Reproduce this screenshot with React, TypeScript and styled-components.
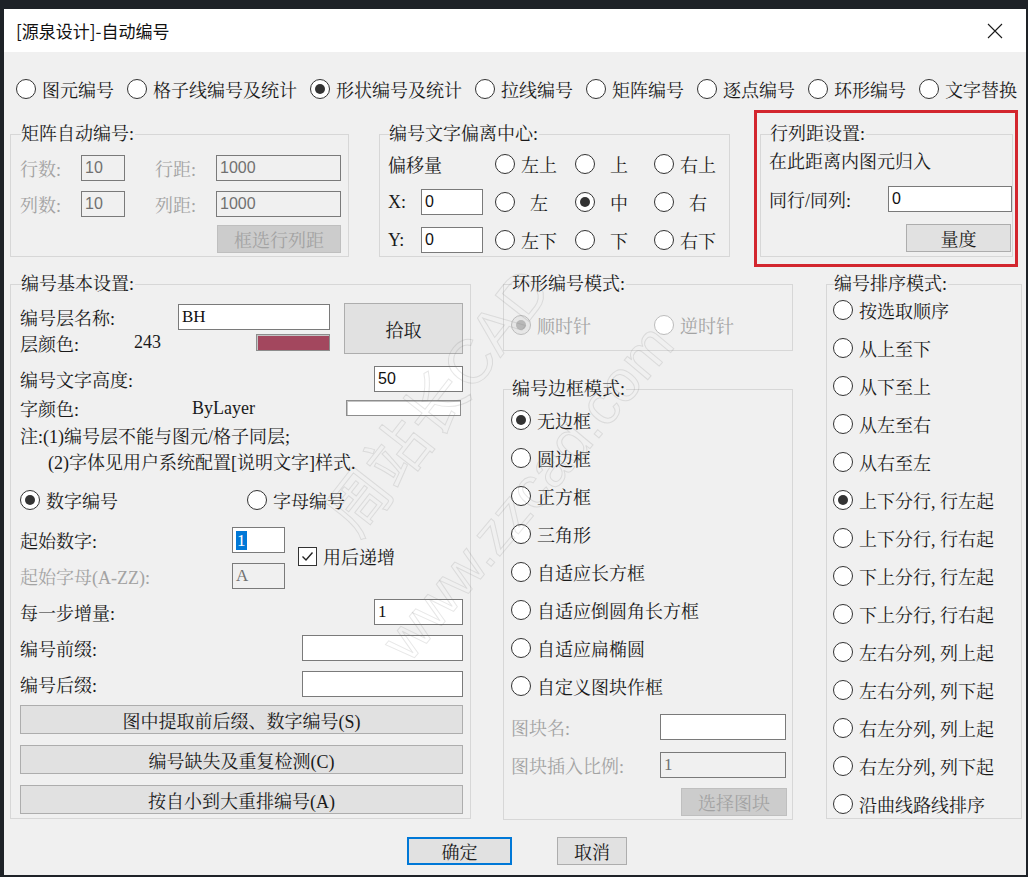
import React from "react";
import styled, { createGlobalStyle } from "styled-components";

const UI = `"Liberation Serif", "Noto Serif CJK SC", "Noto Sans CJK SC", serif`;
const SANS = `"Liberation Sans", "Noto Sans CJK SC", sans-serif`;
const TEXT = "#1a1a1a";
const DIM = "#a3a3a3";

const GlobalStyle = createGlobalStyle`
  html, body { margin: 0; padding: 0; background: #1e2227; }
  body { font-family: ${UI}; font-size: 18px; color: ${TEXT}; }
  * { box-sizing: border-box; }
`;

const Dialog = styled.div`
  margin: 9px 0 0 4px;
  width: 1022px;
  height: 866px;
  background: #f0f0f0;
  display: flex;
  flex-direction: column;
`;

const TitleBar = styled.div`
  height: 43px;
  flex: none;
  background: #ffffff;
  display: flex;
  align-items: center;
  justify-content: space-between;
  padding: 0 23px 0 12px;
`;

const TitleText = styled.span`
  font-family: "Noto Sans CJK SC", sans-serif;
  font-size: 17px;
  color: #111;
`;

const Body = styled.div`
  position: relative;
  flex: 1;
  padding: 27px 0 0 6px;
  overflow: hidden;
`;

const ModeRow = styled.div`
  display: flex;
  gap: 13px;
  height: 20px;
  align-items: center;
  padding-left: 6px;
`;

const TopRow = styled.div`
  display: flex;
  align-items: flex-start;
  margin-top: 11px;
`;

const BottomRow = styled.div`
  display: flex;
  align-items: flex-start;
  margin-top: 7px;
`;

const Column = styled.div<{ $w: number; $ml: number }>`
  display: flex;
  flex-direction: column;
  width: ${(p) => p.$w}px;
  margin-left: ${(p) => p.$ml}px;
`;

const Group = styled.fieldset<{
  $w: number;
  $h: number;
  $pt: number;
  $pl: number;
  $pr?: number;
  $mt?: number;
  $ml?: number;
}>`
  margin: ${(p) => p.$mt ?? 0}px 0 0 ${(p) => p.$ml ?? 0}px;
  min-width: 0;
  flex: none;
  width: ${(p) => p.$w}px;
  height: ${(p) => p.$h}px;
  border: 1px solid #d7d7d7;
  padding: ${(p) => p.$pt}px ${(p) => p.$pr ?? 6}px 0 ${(p) => p.$pl}px;
`;

const Legend = styled.legend`
  padding: 0 1px 0 0;
  margin-left: 1px;
  font-size: 18px;
  line-height: 20px;
  color: ${TEXT};
`;

const RedFrame = styled.div`
  margin-left: 24px;
  width: 264px;
  height: 157px;
  border: 3px solid #d3262e;
  padding: 11px 2px 0 3px;
`;

const Row = styled.div<{ $h?: number; $mt?: number; $pl?: number; $between?: boolean; $end?: boolean; $grow?: boolean }>`
  display: flex;
  align-items: center;
  height: ${(p) => p.$h ?? 26}px;
  margin-top: ${(p) => p.$mt ?? 0}px;
  padding-left: ${(p) => p.$pl ?? 0}px;
  ${(p) => (p.$grow ? "flex: 1;" : "")}
  justify-content: ${(p) => (p.$between ? "space-between" : p.$end ? "flex-end" : "flex-start")};
  white-space: nowrap;
`;

const Label = styled.span<{ $w?: number; $dim?: boolean; $col?: number }>`
  flex: none;
  ${(p) => (p.$w ? `width: ${p.$w}px;` : "")}
  ${(p) => (p.$col ? `grid-column: ${p.$col};` : "")}
  color: ${(p) => (p.$dim ? DIM : TEXT)};
  white-space: nowrap;
`;

const Field = styled.div<{ $w: number; $dim?: boolean; $serif?: boolean; $mr?: number; $col?: number }>`
  flex: none;
  ${(p) => (p.$col ? `grid-column: ${p.$col};` : "")}
  width: ${(p) => p.$w}px;
  height: 26px;
  margin-right: ${(p) => p.$mr ?? 0}px;
  border: 1px solid #7a7a7a;
  background: ${(p) => (p.$dim ? "#f0f0f0" : "#ffffff")};
  color: ${(p) => (p.$dim ? "#707070" : "#111")};
  font-family: ${(p) => (p.$serif ? UI : SANS)};
  font-size: ${(p) => (p.$serif ? 17 : 16)}px;
  display: flex;
  align-items: center;
  padding-left: 3px;
`;

const Selected = styled.span`
  background: #0078d7;
  color: #ffffff;
  line-height: 19px;
  padding: 0 1px;
`;

const Btn = styled.button<{ $w?: number; $h?: number; $dim?: boolean; $primary?: boolean }>`
  flex: none;
  width: ${(p) => (p.$w ? `${p.$w}px` : "100%")};
  height: ${(p) => p.$h ?? 28}px;
  margin: 0;
  padding: 0;
  font-family: ${UI};
  font-size: 18px;
  color: ${(p) => (p.$dim ? DIM : TEXT)};
  background: ${(p) => (p.$dim ? "#cccccc" : "#e1e1e1")};
  border: ${(p) => (p.$primary ? "2px solid #0078d7" : p.$dim ? "1px solid #bfbfbf" : "1px solid #adadad")};
  display: flex;
  align-items: center;
  justify-content: center;
`;

const RadioItem = styled.label<{ $w?: number; $dim?: boolean; $indent?: boolean }>`
  display: flex;
  align-items: center;
  flex: none;
  height: 26px;
  ${(p) => (p.$w ? `width: ${p.$w}px;` : "")}
  color: ${(p) => (p.$dim ? DIM : TEXT)};
  white-space: nowrap;
  & > span:last-child {
    margin-left: ${(p) => (p.$indent ? 15 : 6)}px;
  }
`;

const Circle = styled.span<{ $on?: boolean; $dim?: boolean }>`
  position: relative;
  flex: none;
  width: 20px;
  height: 20px;
  border-radius: 50%;
  border: 1px solid ${(p) => (p.$dim ? "#bcbcbc" : "#333333")};
  background: ${(p) => (p.$dim && p.$on ? "#e6e6e6" : "#ffffff")};
  &::after {
    content: "";
    display: ${(p) => (p.$on ? "block" : "none")};
    position: absolute;
    left: 4px;
    top: 4px;
    width: 10px;
    height: 10px;
    border-radius: 50%;
    background: ${(p) => (p.$dim ? "#b8b8b8" : "#333333")};
  }
`;

const Radio: React.FC<{ label: string; on?: boolean; dim?: boolean; w?: number; indent?: boolean }> = ({
  label,
  on,
  dim,
  w,
  indent,
}) => (
  <RadioItem $w={w} $dim={dim} $indent={indent}>
    <Circle $on={on} $dim={dim} />
    <span>{label}</span>
  </RadioItem>
);

const MatrixGrid = styled.div`
  display: grid;
  grid-template-columns: 61px 74px 61px 125px;
  grid-template-rows: 26px 26px 28px;
  row-gap: 10px;
  align-items: center;
`;

const GridEnd = styled.div<{ $col: number; $mt?: number }>`
  grid-column: ${(p) => p.$col};
  justify-self: end;
  margin-top: ${(p) => p.$mt ?? 0}px;
`;

const OffsetGrid = styled.div`
  display: grid;
  grid-template-columns: 33px 74px 80px 79px auto;
  grid-template-rows: 26px 26px 26px;
  row-gap: 12px;
  align-items: center;
`;

const SpanTwo = styled.span`
  grid-column: 1 / 3;
  align-self: start;
`;

const PickBlock = styled.div`
  display: flex;
  margin-top: 9px;
  height: 51px;
`;

const PickLeft = styled.div`
  flex: 1;
  display: flex;
  flex-direction: column;
`;

const Swatch = styled.div<{ $w: number; $h: number; $c: string; $mr?: number }>`
  flex: none;
  width: ${(p) => p.$w}px;
  height: ${(p) => p.$h}px;
  margin-right: ${(p) => p.$mr ?? 0}px;
  background: ${(p) => p.$c};
  border: 1px solid #8d8d8d;
  box-shadow: inset 1px 1px 0 #c4c4c4;
`;

const StartGrid = styled.div`
  display: grid;
  grid-template-columns: 212px 53px 13px auto;
  grid-template-rows: 26px 26px;
  row-gap: 10px;
  align-items: center;
  margin-top: 14px;
`;

const CheckCell = styled.div`
  grid-column: 4;
  grid-row: 1 / 3;
  align-self: start;
  margin-top: 16px;
  display: flex;
  align-items: center;
  gap: 6px;
`;

const CheckBox = styled.span`
  flex: none;
  width: 19px;
  height: 19px;
  border: 1px solid #333333;
  background: #ffffff;
  display: flex;
  align-items: center;
  justify-content: center;
`;

const ButtonStack = styled.div`
  display: flex;
  flex-direction: column;
  gap: 11px;
  margin-top: 8px;
`;

const RadioList = styled.div<{ $gap: number }>`
  display: flex;
  flex-direction: column;
  gap: ${(p) => p.$gap}px;
`;

const Footer = styled.div`
  display: flex;
  justify-content: center;
  gap: 45px;
  margin-top: 17px;
  padding-right: 2px;
`;

const Watermark = styled.div<{ $x: number; $y: number; $size: number; $angle: number }>`
  position: absolute;
  left: ${(p) => p.$x}px;
  top: ${(p) => p.$y}px;
  font-family: ${SANS};
  font-size: ${(p) => p.$size}px;
  line-height: 1;
  color: transparent;
  -webkit-text-stroke: 1px rgba(120, 120, 120, 0.18);
  white-space: nowrap;
  pointer-events: none;
  transform-origin: 0 100%;
  transform: rotate(${(p) => p.$angle}deg);
`;

const CloseIcon = () => (
  <svg width="16" height="16" viewBox="0 0 16 16">
    <path d="M1 1 L15 15 M15 1 L1 15" stroke="#1a1a1a" strokeWidth="1.1" fill="none" />
  </svg>
);

const sortModes = [
  "按选取顺序",
  "从上至下",
  "从下至上",
  "从左至右",
  "从右至左",
  "上下分行, 行左起",
  "上下分行, 行右起",
  "下上分行, 行左起",
  "下上分行, 行右起",
  "左右分列, 列上起",
  "左右分列, 列下起",
  "右左分列, 列上起",
  "右左分列, 列下起",
  "沿曲线路线排序",
];

const frameModes = [
  "无边框",
  "圆边框",
  "正方框",
  "三角形",
  "自适应长方框",
  "自适应倒圆角长方框",
  "自适应扁椭圆",
  "自定义图块作框",
];

const topModes = ["图元编号", "格子线编号及统计", "形状编号及统计", "拉线编号", "矩阵编号", "逐点编号", "环形编号", "文字替换"];

export default function App() {
  return (
    <>
      <GlobalStyle />
      <Dialog>
        <TitleBar>
          <TitleText>[源泉设计]-自动编号</TitleText>
          <CloseIcon />
        </TitleBar>
        <Body>
          <ModeRow>
            {topModes.map((m, i) => (
              <Radio key={m} label={m} on={i === 2} />
            ))}
          </ModeRow>

          <TopRow>
            <Group $w={339} $h={133} $pt={11} $pl={9} $mt={14}>
              <Legend>矩阵自动编号:</Legend>
              <MatrixGrid>
                <Label $dim>行数:</Label>
                <Field $w={44} $dim>10</Field>
                <Label $dim>行距:</Label>
                <Field $w={125} $dim>1000</Field>
                <Label $dim>列数:</Label>
                <Field $w={44} $dim>10</Field>
                <Label $dim>列距:</Label>
                <Field $w={125} $dim>1000</Field>
                <GridEnd $col={4} $mt={-4}>
                  <Btn $w={124} $dim>框选行列距</Btn>
                </GridEnd>
              </MatrixGrid>
            </Group>

            <Group $w={351} $h={133} $pt={7} $pl={8} $mt={14} $ml={30}>
              <Legend>编号文字偏离中心:</Legend>
              <OffsetGrid>
                <SpanTwo>偏移量</SpanTwo>
                <Radio label="左上" />
                <Radio label="上" indent />
                <Radio label="右上" />
                <Label>X:</Label>
                <Field $w={62}>0</Field>
                <Radio label="左" indent />
                <Radio label="中" indent on />
                <Radio label="右" indent />
                <Label>Y:</Label>
                <Field $w={62}>0</Field>
                <Radio label="左下" />
                <Radio label="下" indent />
                <Radio label="右下" />
              </OffsetGrid>
            </Group>

            <RedFrame>
              <Group $w={253} $h={133} $pt={6} $pl={8} $pr={1}>
                <Legend>行列距设置:</Legend>
                <Row $h={20}>在此距离内图元归入</Row>
                <Row $mt={16}>
                  <Label $w={119}>同行/同列:</Label>
                  <Field $w={124}>0</Field>
                </Row>
                <Row $mt={12} $h={28} $end>
                  <Btn $w={105}>量度</Btn>
                </Row>
              </Group>
            </RedFrame>
          </TopRow>

          <BottomRow>
            <Group $w={461} $h={545} $pt={0} $pl={9} $pr={7}>
              <Legend>编号基本设置:</Legend>
              <PickBlock>
                <PickLeft>
                  <Row $h={30}>
                    <Label $w={158}>编号层名称:</Label>
                    <Field $w={152} $serif>BH</Field>
                  </Row>
                  <Row $h={23}>
                    <Label $w={114}>层颜色:</Label>
                    <Label $w={122}>243</Label>
                    <Swatch $w={74} $h={17} $c="#a3475e" />
                  </Row>
                </PickLeft>
                <Btn $w={119} $h={51}>拾取</Btn>
              </PickBlock>
              <Row $mt={12} $between>
                <Label>编号文字高度:</Label>
                <Field $w={89}>50</Field>
              </Row>
              <Row $mt={3}>
                <Label $w={172}>字颜色:</Label>
                <Label>ByLayer</Label>
                <Row $grow $end>
                  <Swatch $w={115} $h={16} $c="#ffffff" $mr={2} />
                </Row>
              </Row>
              <Row $mt={1}>注:(1)编号层不能与图元/格子同层;</Row>
              <Row $pl={28}>(2)字体见用户系统配置[说明文字]样式.</Row>
              <Row $mt={13}>
                <Radio label="数字编号" on w={227} />
                <Radio label="字母编号" />
              </Row>
              <StartGrid>
                <Label $col={1}>起始数字:</Label>
                <Field $w={53} $serif $col={2}>
                  <Selected>1</Selected>
                </Field>
                <CheckCell>
                  <CheckBox>
                    <svg width="15" height="15" viewBox="0 0 15 15">
                      <path d="M2.5 7.5 L6 11 L12.5 3.5" stroke="#222" strokeWidth="1.4" fill="none" />
                    </svg>
                  </CheckBox>
                  <span>用后递增</span>
                </CheckCell>
                <Label $dim $col={1}>起始字母(A-ZZ):</Label>
                <Field $w={53} $dim $serif $col={2}>A</Field>
              </StartGrid>
              <Row $mt={10} $between>
                <Label>每一步增量:</Label>
                <Field $w={89} $serif>1</Field>
              </Row>
              <Row $mt={10} $between>
                <Label>编号前缀:</Label>
                <Field $w={161} />
              </Row>
              <Row $mt={10} $between>
                <Label>编号后缀:</Label>
                <Field $w={161} />
              </Row>
              <ButtonStack>
                <Btn $h={29}>图中提取前后缀、数字编号(S)</Btn>
                <Btn $h={29}>编号缺失及重复检测(C)</Btn>
                <Btn $h={29}>按自小到大重排编号(A)</Btn>
              </ButtonStack>
            </Group>

            <Column $w={290} $ml={32}>
              <Group $w={290} $h={77} $pt={18} $pl={7}>
                <Legend>环形编号模式:</Legend>
                <Row>
                  <Radio label="顺时针" on dim w={143} />
                  <Radio label="逆时针" dim />
                </Row>
              </Group>
              <Group $w={290} $h={441} $pt={8} $pl={7} $pr={5} $mt={28}>
                <Legend>编号边框模式:</Legend>
                <RadioList $gap={12}>
                  {frameModes.map((m, i) => (
                    <Radio key={m} label={m} on={i === 0} />
                  ))}
                </RadioList>
                <Row $mt={15}>
                  <Label $w={149} $dim>图块名:</Label>
                  <Field $w={126} />
                </Row>
                <Row $mt={12}>
                  <Label $w={149} $dim>图块插入比例:</Label>
                  <Field $w={126} $dim $serif>1</Field>
                </Row>
                <Row $mt={10} $h={28} $end>
                  <Btn $w={106} $dim>选择图块</Btn>
                </Row>
              </Group>
            </Column>

            <Group $w={196} $h={545} $pt={3} $pl={6} $ml={33}>
              <Legend>编号排序模式:</Legend>
              <RadioList $gap={12}>
                {sortModes.map((m, i) => (
                  <Radio key={m} label={m} on={i === 5} />
                ))}
              </RadioList>
            </Group>
          </BottomRow>

          <Footer>
            <Btn $w={105} $primary>确定</Btn>
            <Btn $w={70}>取消</Btn>
          </Footer>

          <Watermark $x={362} $y={432} $size={62} $angle={-52}>周站长CAD</Watermark>
          <Watermark $x={412} $y={560} $size={58} $angle={-50}>www.zzcad.com</Watermark>
        </Body>
      </Dialog>
    </>
  );
}
